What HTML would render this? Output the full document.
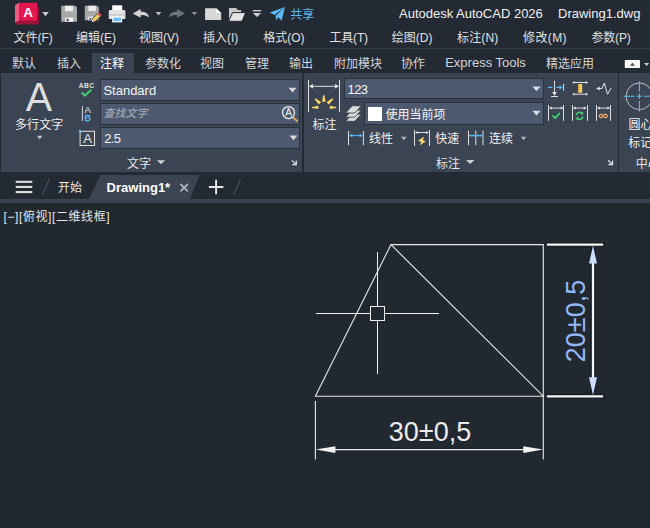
<!DOCTYPE html>
<html lang="zh-CN">
<head>
<meta charset="utf-8">
<title>Autodesk AutoCAD 2026 - Drawing1.dwg</title>
<style>
html,body{margin:0;padding:0;}
body{width:650px;height:528px;overflow:hidden;background:#212830;position:relative;
 font-family:"Liberation Sans","Noto Sans CJK SC",sans-serif;font-size:12px;color:#e6e6e6;}
.abs{position:absolute;}
.t{position:absolute;z-index:2;white-space:nowrap;line-height:20px;height:20px;}
#title{left:0;top:0;width:650px;height:48px;background:#242a34;}
#band{left:0;top:47.8px;width:650px;height:1.3px;background:#353c4a;}
#tabs{left:0;top:49px;width:650px;height:24px;background:#242a34;}
#tabact{left:92px;top:53px;width:42px;height:20px;background:#3b4453;}
#ribbon{left:0;top:73px;width:650px;height:99px;background:#242a34;}
.panel{position:absolute;top:73px;height:98.7px;background:#3b4453;}
.combo{position:absolute;background:#4d596e;border:1px solid #2a303b;box-sizing:border-box;}
#filetabs{left:0;top:172px;width:650px;height:27px;background:#242a34;}
#strip{left:0;top:199px;width:650px;height:4px;background:#3b4453;}
.menu{top:28px;color:#e0e0e0;}
.rt{top:54.2px;color:#d2d5da;}
svg{position:absolute;left:0;top:0;overflow:visible;}
</style>
</head>
<body>
<div id="title" class="abs"></div>
<div id="band" class="abs"></div>
<div id="tabs" class="abs"></div>
<div id="tabact" class="abs"></div>
<div id="ribbon" class="abs"></div>
<div class="panel" style="left:1.2px;width:300.8px;"></div>
<div class="panel" style="left:303.6px;width:314px;"></div>
<div class="panel" style="left:618.8px;width:32px;"></div>
<div id="filetabs" class="abs"></div>
<div id="strip" class="abs"></div>

<!-- title text -->
<span class="t" style="left:399px;top:4px;font-size:13px;color:#f0f0f0;">Autodesk AutoCAD 2026</span>
<span class="t" style="left:558px;top:4px;font-size:13px;color:#f0f0f0;">Drawing1.dwg</span>
<span class="t" style="left:290.2px;top:5.4px;font-size:12px;color:#5bb8f5;">共享</span>

<!-- menu bar -->
<span class="t menu" style="left:13.4px;">文件(F)</span>
<span class="t menu" style="left:76px;">编辑(E)</span>
<span class="t menu" style="left:139px;">视图(V)</span>
<span class="t menu" style="left:203px;">插入(I)</span>
<span class="t menu" style="left:263.2px;">格式(O)</span>
<span class="t menu" style="left:329.4px;letter-spacing:-0.15px;">工具(T)</span>
<span class="t menu" style="left:391.8px;">绘图(D)</span>
<span class="t menu" style="left:457px;letter-spacing:0.15px;">标注(N)</span>
<span class="t menu" style="left:523px;letter-spacing:0.4px;">修改(M)</span>
<span class="t menu" style="left:591.4px;letter-spacing:-0.15px;">参数(P)</span>

<!-- ribbon tabs -->
<span class="t rt" style="left:12px;">默认</span>
<span class="t rt" style="left:57px;">插入</span>
<span class="t rt" style="left:100px;color:#fff;">注释</span>
<span class="t rt" style="left:145px;">参数化</span>
<span class="t rt" style="left:200px;">视图</span>
<span class="t rt" style="left:245px;">管理</span>
<span class="t rt" style="left:289px;">输出</span>
<span class="t rt" style="left:334px;">附加模块</span>
<span class="t rt" style="left:401px;">协作</span>
<span class="t rt" style="left:445.2px;top:53.4px;font-size:13px;">Express Tools</span>
<span class="t rt" style="left:546px;">精选应用</span>

<!-- text panel -->
<span class="t" style="left:15px;top:115.2px;letter-spacing:0.1px;color:#f0f0f0;">多行文字</span>
<div class="combo" style="left:100px;top:79px;width:199.5px;height:21.7px;"></div>
<div class="combo" style="left:100px;top:103px;width:199.5px;height:21.5px;"></div>
<div class="combo" style="left:100px;top:127.2px;width:199.5px;height:21.6px;"></div>
<span class="t" style="left:103.4px;top:81px;font-size:13px;color:#f4f4f4;">Standard</span>
<span class="t" style="left:103.5px;top:102.9px;font-size:11px;font-style:italic;color:#aeb5c1;">查找文字</span>
<span class="t" style="left:104.2px;top:129px;font-size:13px;letter-spacing:-0.6px;color:#f4f4f4;">2.5</span>
<span class="t" style="left:127px;top:153.8px;color:#e6e6e6;">文字</span>

<!-- dim panel -->
<span class="t" style="left:312.6px;top:114.6px;color:#f0f0f0;">标注</span>
<div class="combo" style="left:344.3px;top:78.2px;width:199.3px;height:21.2px;"></div>
<div class="combo" style="left:364.1px;top:102.4px;width:179.5px;height:22.3px;"></div>
<div class="abs" style="left:367.8px;top:106.8px;width:14.4px;height:14.2px;background:#fff;"></div>
<span class="t" style="left:347.6px;top:80px;font-size:13px;letter-spacing:-0.6px;color:#f4f4f4;">123</span>
<span class="t" style="left:385.4px;top:104.6px;color:#f4f4f4;">使用当前项</span>
<span class="t" style="left:369px;top:129.2px;color:#f0f0f0;">线性</span>
<span class="t" style="left:435.2px;top:129.2px;color:#f0f0f0;">快速</span>
<span class="t" style="left:489px;top:129.2px;color:#f0f0f0;">连续</span>
<span class="t" style="left:436px;top:153.8px;color:#e6e6e6;">标注</span>

<!-- center panel -->
<span class="t" style="left:628.4px;top:115.2px;color:#f0f0f0;">圆心</span>
<span class="t" style="left:628.2px;top:132.6px;color:#f0f0f0;">标记</span>
<span class="t" style="left:635.8px;top:153.8px;color:#e6e6e6;">中心</span>

<!-- file tabs -->
<span class="t" style="left:58px;top:178.4px;color:#e6e6e6;">开始</span>
<span class="t" style="left:106.6px;top:178px;font-size:13px;font-weight:bold;color:#fff;">Drawing1*</span>

<!-- viewport label -->
<span class="t" style="left:3.6px;top:206.6px;letter-spacing:0.58px;color:#e6e6e6;">[−][俯视][二维线框]</span>

<svg id="icons" width="650" height="528" viewBox="0 0 650 528">
<!-- app logo -->
<path d="M15 5 L19 2.8 L19 20.8 L15 23 Z" fill="#ec5a83"/>
<path d="M19 20.8 L37 20.8 L37 7 L38.8 7 L38.8 24.6 L17 24.6 L15 23 Z" fill="#9c1238"/>
<rect x="19" y="2.8" width="18" height="18" fill="#e2174f"/>
<text x="28.1" y="17" text-anchor="middle" font-size="13.5" font-weight="bold" fill="#fff" style="font-family:'Liberation Sans',sans-serif;">A</text>
<path d="M42.2 12 L48.8 12 L45.5 16.2 Z" fill="#cfcfcf"/>
<!-- save -->
<path d="M61.2 5.7 L75.5 5.7 L77 7.2 L77 21.7 L61.2 21.7 Z" fill="#a8a8a8"/>
<rect x="65" y="5.7" width="8.2" height="5.6" fill="#ececec"/>
<rect x="65" y="17.6" width="8.2" height="4.1" fill="#f2f2f2"/>
<rect x="66.6" y="18.8" width="2" height="2.2" fill="#3a3f4a"/>
<!-- save as -->
<path d="M84.8 5.7 L97.4 5.7 L98.9 7.2 L98.9 20.3 L84.8 20.3 Z" fill="#a8a8a8"/>
<rect x="88.3" y="5.7" width="7.6" height="5.2" fill="#ececec"/>
<rect x="88.3" y="16.6" width="5" height="3.7" fill="#f2f2f2"/>
<rect x="89.5" y="17.8" width="1.6" height="2" fill="#3a3f4a"/>
<path d="M92 22 L92.6 18.6 L97.6 13.6 L100.4 16.4 L95.4 21.4 Z" fill="#f6cd63" stroke="#242a34" stroke-width="0.8"/>
<path d="M97.6 13.6 L98.9 12.3 L101.7 15.1 L100.4 16.4 Z" fill="#ea4a60"/>
<path d="M92 22 L92.4 19.8 L94.2 21.6 Z" fill="#f4f4f4"/>
<!-- print -->
<rect x="112.2" y="5.3" width="10" height="6" fill="#ffffff"/>
<path d="M110.3 10 L124 10 Q125.4 10 125.4 11.4 L125.4 19 L108.8 19 L108.8 11.4 Q108.8 10 110.3 10 Z" fill="#e2e2e2"/>
<rect x="108.8" y="14.2" width="16.6" height="1.2" fill="#c4c4c4"/>
<rect x="112.2" y="16.4" width="10" height="6" fill="#ffffff"/>
<rect x="113.4" y="17.5" width="7.6" height="3.8" fill="#6cbcf4"/>
<!-- undo -->
<path d="M132.7 13.4 L140.6 9 L140.6 11.6 Q148 11.4 149.2 17.6 Q146 14.6 140.6 15.2 L140.6 17.8 Z" fill="#d2d2d2"/>
<path d="M155.6 12 L161.4 12 L158.5 15.4 Z" fill="#bdbdbd"/>
<!-- redo -->
<path d="M185 13.4 L177.1 9 L177.1 11.6 Q169.8 11.4 168.7 17.6 Q171.8 14.6 177.1 15.2 L177.1 17.8 Z" fill="#6d737d"/>
<path d="M191.6 12 L197.2 12 L194.4 15.2 Z" fill="#8b9099"/>
<!-- new -->
<path d="M205.1 8.2 L216.2 8.2 L221.2 13 L221.2 19.9 L205.1 19.9 Z" fill="#d8d8d8"/>
<path d="M216.2 8.2 L221.2 13 L216.2 13 Z" fill="#ffffff"/>
<path d="M216.9 7.8 L221.6 12.3" stroke="#242a34" stroke-width="1" fill="none"/>
<!-- open -->
<path d="M229 8 L236.4 8 L237.6 10 L241.2 10 L241.2 20.8 L229 20.8 Z" fill="#c6c6c6"/>
<path d="M232.6 12.6 L245.6 12.6 L242 21.3 L228.6 21.3 Z" fill="#e4e4e4" stroke="#242a34" stroke-width="1"/>
<!-- qat dropdown -->
<rect x="252.8" y="10" width="8.4" height="1.4" fill="#cfcfcf"/>
<path d="M252.8 13 L261.2 13 L257 17 Z" fill="#cfcfcf"/>
<!-- share plane -->
<path d="M285 7 L269.7 12.6 L274.6 15 Z" fill="#5bb8f5"/>
<path d="M285 7 L275.6 15.8 L276 20.2 L278.4 17.2 L281.6 20.8 Z" fill="#5bb8f5"/>
<!-- ribbon minimize button -->
<rect x="624.8" y="60" width="15.2" height="8" rx="0.6" fill="#f6f6f6"/>
<path d="M629.8 65.8 L635.2 65.8 L632.5 62.8 Z" fill="#4c4c4c"/>
<path d="M644 63 L649.2 63 L646.6 66 Z" fill="#d0d0d0"/>
<!-- multiline text dropdown -->
<path d="M36.9 135.8 L42.5 135.8 L39.7 139.3 Z" fill="#c4c4c4"/>
<text transform="translate(38.95 110.9) scale(0.965 1)" text-anchor="middle" font-size="40.8" fill="#dedede" style="font-family:'Liberation Sans',sans-serif;">A</text>
<!-- ABC check -->
<text x="86.7" y="88.2" text-anchor="middle" font-size="6.7" font-weight="bold" fill="#e0e0e0" letter-spacing="0.45" style="font-family:'Liberation Sans',sans-serif;">ABC</text>
<path d="M81.6 92.4 L84.8 95.6 L91.4 89.8" fill="none" stroke="#3fd070" stroke-width="2"/>
<!-- A/B find -->
<path d="M82.4 106 L82.4 120.8" stroke="#dcdcdc" stroke-width="1" fill="none"/>
<text x="87.65" y="112.8" text-anchor="middle" font-size="9.6" fill="#e6e6e6" style="font-family:'Liberation Sans',sans-serif;">A</text>
<text x="87.6" y="120.7" text-anchor="middle" font-size="9.5" fill="#5cc0ff" stroke="#5cc0ff" stroke-width="0.3" style="font-family:'Liberation Sans',sans-serif;">B</text>
<!-- [A] height -->
<rect x="80.1" y="131.3" width="14.4" height="14.2" fill="none" stroke="#e2e2e2" stroke-width="1"/>
<rect x="78.8" y="129.9" width="2.1" height="2.1" fill="#5cc0ff"/>
<text x="87.65" y="143.2" text-anchor="middle" font-size="13.2" fill="#e4e4e4" style="font-family:'Liberation Sans',sans-serif;">A</text>
<!-- combo arrows -->
<g fill="#dadada">
<path d="M288.6 87.8 L296.4 87.8 L292.5 92.4 Z"/>
<path d="M289.6 135.6 L297.4 135.6 L293.5 140.2 Z"/>
<path d="M532.4 86.6 L540.6 86.6 L536.5 91.2 Z"/>
<path d="M532.4 110.8 L540.6 110.8 L536.5 115.4 Z"/>
</g>
<!-- find icon -->
<circle cx="288.5" cy="112.5" r="6" fill="none" stroke="#f2f2f2" stroke-width="1.25"/>
<text x="288.55" y="115.9" text-anchor="middle" font-size="10" fill="#f2f2f2" style="font-family:'Liberation Sans',sans-serif;">A</text>
<path d="M293 117.4 L297.6 121.4" stroke="#efb060" stroke-width="1.7" fill="none"/>
<!-- panel corner arrows -->
<g fill="none" stroke="#dedede" stroke-width="1.3">
<path d="M291.9 160.4 L296.2 164.6 M292.2 164.7 L296.9 164.7 M296.3 160.6 L296.3 165.3"/>
<path d="M608.1 160.2 L612.4 164.4 M608.4 164.5 L613.1 164.5 M612.5 160.4 L612.5 165.1"/>
</g>
<!-- panel title arrows -->
<path d="M156.8 160.2 L165.2 160.2 L161 164.3 Z" fill="#cfcfcf"/>
<path d="M466 160 L474.4 160 L470.2 164.1 Z" fill="#cfcfcf"/>
<!-- big dim icon -->
<g fill="none" stroke="#e0e0e0" stroke-width="1">
<path d="M308.5 79.8 L308.5 112 M339.5 79.8 L339.5 112 M312 86.3 L336 86.3"/>
</g>
<path d="M309 86.3 L313 84 L313 88.6 Z M339 86.3 L335 84 L335 88.6 Z" fill="#e8e8e8"/>
<g fill="#f8d568">
<path d="M323.1 95.3 L324.5 95.3 L325.6 101.8 L322.2 101.8 Z"/>
<path d="M314.6 99.2 L315.6 98.2 L321.2 102.2 L318.8 104.6 Z"/>
<path d="M333.2 99.2 L332.2 98.2 L326.6 102.2 L329 104.6 Z"/>
<path d="M312 107 L318.4 105.8 L318.4 109 L312 108 Z"/>
<path d="M336.2 107 L329.8 105.8 L329.8 109 L336.2 108 Z"/>
</g>
<!-- layers icon -->
<g fill="#dcdcdc" stroke="#3b4453" stroke-width="0.9">
<path d="M352.3 114.1 L361.4 114.1 L354.8 121.3 L345.6 121.3 Z"/>
<path d="M352.3 110 L361.4 110 L354.8 117.2 L345.6 117.2 Z"/>
<path d="M352.3 105.8 L361.4 105.8 L354.8 113 L345.6 113 Z"/>
</g>
<!-- linear -->
<g fill="none" stroke="#e0e0e0" stroke-width="1">
<path d="M348.5 131 L348.5 145.2 M363.4 131 L363.4 145.2"/>
<path d="M414.5 130 L414.5 146 M429.5 130 L429.5 146 M417 132.5 L427 132.5"/>
<path d="M468.5 130.6 L468.5 145.2 M475.8 130.6 L475.8 145.2 M483 130.6 L483 145.2"/>
</g>
<path d="M351 135.6 L361 135.6" stroke="#5bb8f5" stroke-width="1" fill="none"/>
<path d="M349.2 135.6 L352.4 133.8 L352.4 137.4 Z M362.8 135.6 L359.6 133.8 L359.6 137.4 Z" fill="#5bb8f5"/>
<path d="M415 132.5 L417.8 130.9 L417.8 134.1 Z M429 132.5 L426.2 130.9 L426.2 134.1 Z" fill="#e0e0e0"/>
<path d="M424.2 136.6 L418.1 140.6 L421.2 142 L419.8 145.2 L425.8 141.4 L422.9 140.1 Z" fill="#f8d568"/>
<path d="M469 135.6 L482.6 135.6" stroke="#5bb8f5" stroke-width="1" fill="none"/>
<path d="M469 135.6 L471.4 134.2 L471.4 137 Z M475.3 135.6 L472.9 134.2 L472.9 137 Z M476.3 135.6 L478.7 134.2 L478.7 137 Z M482.5 135.6 L480.1 134.2 L480.1 137 Z" fill="#5bb8f5"/>
<path d="M401 136.8 L406.6 136.8 L403.8 140.2 Z" fill="#b4b4b4"/>
<path d="M520.8 136.8 L526.4 136.8 L523.6 140.2 Z" fill="#b4b4b4"/>
<!-- small dim icons row 1 -->
<g fill="none" stroke="#e0e0e0" stroke-width="1">
<path d="M554.5 80.8 L554.5 93 M551 96.5 L558 96.5 M563.6 84 L563.6 90.8"/>
<path d="M572.8 82.5 L587.6 82.5 M572.8 94.2 L587.6 94.2"/>
<path d="M598 88.5 L602 88.5 L604.3 83 L607.5 94.2 L611.2 88"/>
</g>
<path d="M552.1 92 L556.9 92 L554.5 95.8 Z" fill="#e8e8e8"/>
<path d="M548 87.4 L552.4 87.4 M556.4 87.4 L560.2 87.4" stroke="#5bb8f5" stroke-width="1.2" fill="none"/>
<path d="M562.8 87.4 L559.4 85.2 L559.4 89.6 Z" fill="#5bb8f5"/>
<path d="M572.3 82.5 L574.5 81 L574.5 84 Z M588 82.5 L585.8 81 L585.8 84 Z M572.3 94.2 L574.5 92.7 L574.5 95.7 Z M588 94.2 L585.8 92.7 L585.8 95.7 Z" fill="#e0e0e0"/>
<rect x="578" y="84" width="4.2" height="8.8" fill="#f6cd63"/>
<path d="M578 85.8 L580 85.8 M578 87.6 L579.4 87.6 M578 89.4 L580 89.4 M578 91.2 L579.4 91.2" stroke="#a07a20" stroke-width="0.7" fill="none"/>
<path d="M596.2 88.5 L599.6 86.4 L599.6 90.6 Z" fill="#e0e0e0"/>
<!-- small dim icons row 2 -->
<path d="M548.5 105 L548.5 120.8 M563.5 105 L563.5 120.8 M550.6 108.1 L561.9 108.1" fill="none" stroke="#e0e0e0" stroke-width="1"/>
<path d="M549.0 108.1 L551.8000000000001 106.5 L551.8000000000001 109.7 Z M563.5 108.1 L560.6999999999999 106.5 L560.6999999999999 109.7 Z" fill="#e0e0e0"/>
<path d="M572.5 105 L572.5 120.8 M587.5 105 L587.5 120.8 M574.5 108.1 L585 108.1" fill="none" stroke="#e0e0e0" stroke-width="1"/>
<path d="M572.9 108.1 L575.7 106.5 L575.7 109.7 Z M586.6 108.1 L583.8 106.5 L583.8 109.7 Z" fill="#e0e0e0"/>
<path d="M596.5 105 L596.5 120.8 M610.5 105 L610.5 120.8 M598.6 108.1 L608.6 108.1" fill="none" stroke="#e0e0e0" stroke-width="1"/>
<path d="M597.0 108.1 L599.8000000000001 106.5 L599.8000000000001 109.7 Z M610.2 108.1 L607.4 106.5 L607.4 109.7 Z" fill="#e0e0e0"/>
<path d="M552.4 115.4 L555.2 118.2 L559.8 112.8" fill="none" stroke="#3fd070" stroke-width="1.8"/>
<g fill="none" stroke="#3fd070" stroke-width="1.5">
<path d="M576.2 115.2 A3.5 3.5 0 0 1 582 113.2"/>
<path d="M583 116.4 A3.5 3.5 0 0 1 577.2 118.4"/>
</g>
<path d="M580.8 111.4 L584 113 L581.2 115.2 Z M578.4 120.2 L575.2 118.6 L578 116.4 Z" fill="#3fd070"/>
<path d="M603.2 116 C601.8 113.6 599.4 113.8 599.4 116 C599.4 118.2 601.8 118.4 603.2 116 C604.6 113.6 607.2 113.8 607.2 116 C607.2 118.2 604.6 118.4 603.2 116 Z" fill="none" stroke="#f0a868" stroke-width="1.3"/>
<!-- center mark icon -->
<circle cx="639.4" cy="96.3" r="13.3" fill="none" stroke="#bcbcbc" stroke-width="1"/>
<g fill="none" stroke="#5bb8f5" stroke-width="1.1">
<path d="M623.6 96.3 L634.6 96.3 M636.6 96.3 L642.2 96.3 M644.2 96.3 L650 96.3"/>
<path d="M639.4 81.2 L639.4 91.6 M639.4 93.6 L639.4 99 M639.4 101 L639.4 111.6"/>
</g>
<!-- file tab bar -->
<path d="M100.3 175 L199.6 175 L190 199.2 L89 199.2 Z" fill="#3b4453"/>
<g fill="#dcdcdc">
<rect x="15.7" y="180.8" width="16.6" height="2.1"/>
<rect x="15.7" y="185.9" width="16.6" height="2.1"/>
<rect x="15.7" y="191" width="16.6" height="2.1"/>
</g>
<g fill="none" stroke="#454d5c" stroke-width="1.3">
<path d="M49.6 178.6 L42.6 194.6"/>
<path d="M240.4 179.6 L234 194.2"/>
</g>
<path d="M180.4 184 L187.9 191.4 M187.9 184 L180.4 191.4" stroke="#adb2bb" stroke-width="1.8" fill="none"/>
<path d="M208.9 187 L223.4 187 M216.1 179.8 L216.1 194.2" stroke="#e8e8e8" stroke-width="1.9" fill="none"/>
</svg>
<svg id="art" width="650" height="528" viewBox="0 0 650 528">
<!-- drawing geometry -->
<g fill="none" stroke="#e9e9e9" stroke-width="1.1">
<path d="M391 244.6 L315.4 396.2 L543.3 396.2 Z"/>
<path d="M391 244.6 L543.3 244.6 L543.3 459.5"/>
<path d="M315.4 401 L315.4 459.5"/>
<path d="M325 449.6 L533 449.6"/>
</g>
<path d="M315.6 449.6 L335.4 446.3 L335.4 452.9 Z M543.1 449.6 L523.3 446.3 L523.3 452.9 Z" fill="#f2f2f2"/>
<text x="430" y="441.4" text-anchor="middle" font-size="27" fill="#ececec" style="font-family:'Liberation Sans',sans-serif;">30±0,5</text>
<!-- selected vertical dimension -->
<g fill="none" stroke="#161a21" stroke-width="5.4" stroke-linecap="round" opacity="0.7">
<path d="M547.8 244.6 L602.6 244.6 M547.8 396.3 L602.6 396.3 M593 247 L593 394"/>
</g>
<g fill="none" stroke="#f6f6f6" stroke-width="2.3">
<path d="M546.9 244.6 L603.2 244.6 M546.9 396.3 L603.2 396.3 M593 262 L593 379"/>
</g>
<path d="M593 245.6 L597 263.6 L589 263.6 Z M593 395.3 L597 377.3 L589 377.3 Z" fill="#cbdcff"/>
<text transform="translate(584.8 321) rotate(-90)" text-anchor="middle" font-size="27" fill="#94b7f4" style="font-family:'Liberation Sans',sans-serif;">20±0,5</text>
<!-- crosshair -->
<g fill="none" stroke="#f0f0f0" stroke-width="1" shape-rendering="crispEdges">
<path d="M316 313.5 L371 313.5 M385 313.5 L439 313.5 M377.5 252 L377.5 306 M377.5 320 L377.5 374"/>
<rect x="370.5" y="306.5" width="14" height="14"/>
</g>
</svg>
</body>
</html>
